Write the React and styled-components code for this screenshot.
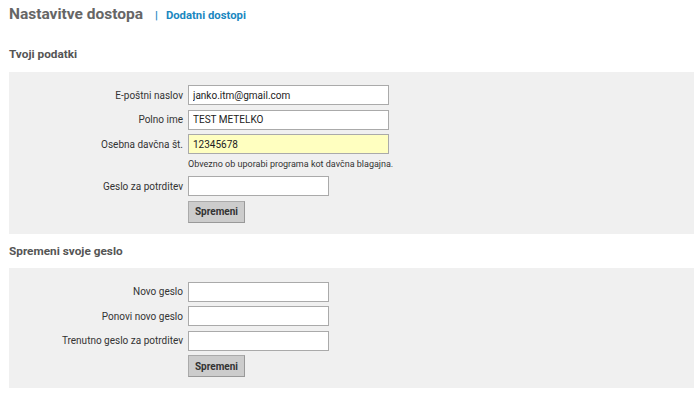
import React from "react";
import styled, { createGlobalStyle } from "styled-components";

const GlobalStyle = createGlobalStyle`
  html, body { margin: 0; padding: 0; background: #fff; }
  body { font-family: Roboto, "Liberation Sans", Arial, sans-serif; color: #333; }
`;

const Page = styled.div`
  padding: 3px 0 0 9px;
`;

const TitleBar = styled.div`
  display: flex;
  align-items: baseline;
  height: 24px;
`;

const Title = styled.h1`
  margin: 0;
  font-size: 15.5px;
  font-weight: 700;
  color: #666;
  line-height: 22px;
`;

const Sep = styled.span`
  margin: 0 8px 0 12px;
  font-size: 11.3px;
  font-weight: 700;
  color: #1a87c0;
`;

const TabLink = styled.a`
  font-size: 11.3px;
  font-weight: 700;
  color: #1a87c0;
  text-decoration: none;
`;

const SectionTitle = styled.h2`
  margin: ${(p) => p.$mt}px 0 0 0;
  font-size: 11.8px;
  font-weight: 700;
  color: #555;
  line-height: 14px;
  height: ${(p) => p.$h}px;
`;

const Panel = styled.div`
  background: #f0f0f0;
  padding: ${(p) => p.$pt}px 0 11px 0;
`;

const Form = styled.div`
  display: grid;
  grid-template-columns: 174px 1fr;
  column-gap: 5px;
  row-gap: 4.5px;
  align-items: center;
`;

const Label = styled.label`
  justify-self: end;
  font-size: 10px;
  color: #333;
  white-space: nowrap;
`;

const Input = styled.input`
  box-sizing: border-box;
  width: ${(p) => p.$w}px;
  height: 20px;
  margin: 0;
  padding: 0 4px;
  border: 1px solid #aaa;
  border-radius: 0;
  background: ${(p) => (p.$hl ? "#ffffc0" : "#fff")};
  font-family: Roboto, "Liberation Sans", Arial, sans-serif;
  font-size: 10px;
  color: #222;
  outline: none;
`;

const Note = styled.div`
  grid-column: 2;
  font-size: 9px;
  color: #333;
  line-height: 12px;
  margin: -1px 0 2px 0;
`;

const Button = styled.button`
  grid-column: 2;
  justify-self: start;
  box-sizing: border-box;
  width: 57px;
  height: 22px;
  margin: 0;
  padding: 0;
  border: 1px solid #aaa;
  border-right-color: #999;
  border-bottom-color: #999;
  background: #ccc;
  font-family: Roboto, "Liberation Sans", Arial, sans-serif;
  font-size: 10px;
  font-weight: 700;
  color: #333;
`;

export default function App() {
  return (
    <>
      <GlobalStyle />
      <Page>
        <TitleBar>
          <Title>Nastavitve dostopa</Title>
          <Sep>|</Sep>
          <TabLink href="#">Dodatni dostopi</TabLink>
        </TitleBar>

        <SectionTitle $mt={20} $h={25}>Tvoji podatki</SectionTitle>
        <Panel $pt={13}>
          <Form>
            <Label>E-poštni naslov</Label>
            <Input $w={201} defaultValue="janko.itm@gmail.com" />
            <Label>Polno ime</Label>
            <Input $w={201} defaultValue="TEST METELKO" />
            <Label>Osebna davčna št.</Label>
            <Input $w={201} $hl defaultValue="12345678" />
            <Note>Obvezno ob uporabi programa kot davčna blagajna.</Note>
            <Label>Geslo za potrditev</Label>
            <Input $w={141} type="password" />
            <Button>Spremeni</Button>
          </Form>
        </Panel>

        <SectionTitle $mt={10} $h={24}>Spremeni svoje geslo</SectionTitle>
        <Panel $pt={14}>
          <Form>
            <Label>Novo geslo</Label>
            <Input $w={141} type="password" />
            <Label>Ponovi novo geslo</Label>
            <Input $w={141} type="password" />
            <Label>Trenutno geslo za potrditev</Label>
            <Input $w={141} type="password" />
            <Button>Spremeni</Button>
          </Form>
        </Panel>
      </Page>
    </>
  );
}
